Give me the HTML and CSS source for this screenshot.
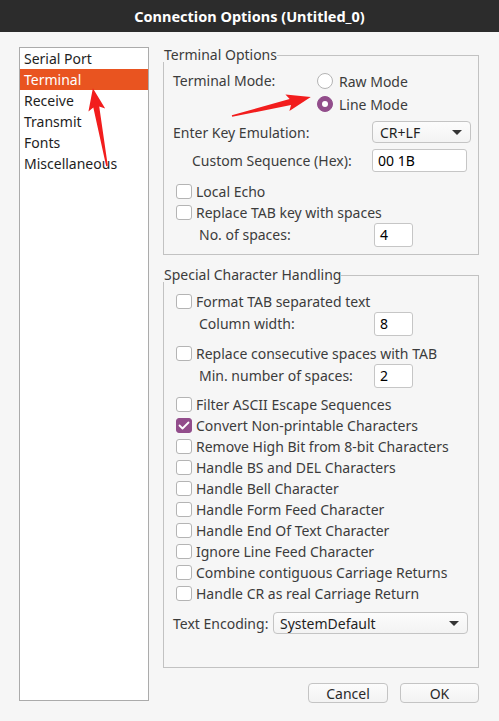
FILE: index.html
```html
<!DOCTYPE html>
<html>
<head>
<meta charset="utf-8">
<link rel="stylesheet" href="styles.css">
</head>
<body>
<div class="titlebar">Connection Options (Untitled_0)</div>
<div class="main">
  <div class="pagelist">
    <div class="item">Serial Port</div>
    <div class="item sel">Terminal</div>
    <div class="item">Receive</div>
    <div class="item">Transmit</div>
    <div class="item">Fonts</div>
    <div class="item">Miscellaneous</div>
  </div>
  <div class="right">
    <div class="group g1">
      <div class="group-head"><span class="group-title">Terminal Options</span><span class="group-line"></span></div>
      <div class="group-body">
        <div class="mode-row">
          <div class="lbl w-mode">Terminal Mode:</div>
          <div class="radios">
            <div class="radio-row"><span class="radio"></span>Raw Mode</div>
            <div class="radio-row r2"><span class="radio on"></span>Line Mode</div>
          </div>
        </div>
        <div class="row enter"><div class="lbl w-enter">Enter Key Emulation:</div><div class="combo c-enter"><span>CR+LF</span><span class="caret"></span></div></div>
        <div class="row custom"><div class="lbl w-custom">Custom Sequence (Hex):</div><div class="input i-custom">00 1B</div></div>
        <div class="check first-check"><span class="box"></span>Local Echo</div>
        <div class="check"><span class="box"></span>Replace TAB key with spaces</div>
        <div class="row sub"><div class="lbl w-sub">No. of spaces:</div><div class="input spin">4</div></div>
      </div>
    </div>
    <div class="group g2">
      <div class="group-head"><span class="group-title">Special Character Handling</span><span class="group-line"></span></div>
      <div class="group-body b2">
        <div class="check"><span class="box"></span>Format TAB separated text</div>
        <div class="row sub"><div class="lbl w-sub">Column width:</div><div class="input spin">8</div></div>
        <div class="check gap8"><span class="box"></span>Replace consecutive spaces with TAB</div>
        <div class="row sub sub2"><div class="lbl w-sub">Min. number of spaces:</div><div class="input spin">2</div></div>
        <div class="check gap7"><span class="box"></span>Filter ASCII Escape Sequences</div>
        <div class="check"><span class="box on"><svg viewBox="0 0 16 15" width="16" height="15"><path d="M3.5 7.5 L6.5 10.5 L12.5 4.5" fill="none" stroke="#fff" stroke-width="1.8" stroke-linecap="round" stroke-linejoin="round"/></svg></span>Convert Non-printable Characters</div>
        <div class="check"><span class="box"></span>Remove High Bit from 8-bit Characters</div>
        <div class="check"><span class="box"></span>Handle BS and DEL Characters</div>
        <div class="check"><span class="box"></span>Handle Bell Character</div>
        <div class="check"><span class="box"></span>Handle Form Feed Character</div>
        <div class="check"><span class="box"></span>Handle End Of Text Character</div>
        <div class="check"><span class="box"></span>Ignore Line Feed Character</div>
        <div class="check"><span class="box"></span>Combine contiguous Carriage Returns</div>
        <div class="check"><span class="box"></span>Handle CR as real Carriage Return</div>
        <div class="row enc"><div class="lbl w-enc">Text Encoding:</div><div class="combo c-enc"><span>SystemDefault</span><span class="caret"></span></div></div>
      </div>
    </div>
    <div class="buttons">
      <div class="btn b-cancel">Cancel</div>
      <div class="btn b-ok">OK</div>
    </div>
  </div>
</div>
<svg class="arrows" width="499" height="721" viewBox="0 0 499 721">
  <polygon fill="#f21d1d" transform="translate(107,166) rotate(-100.3)" points="0,-0.8 60,-3 57,-8.5 79,0 57,8.5 60,3 0,0.8"/>
  <polygon fill="#f21d1d" transform="translate(232,116) rotate(-13.5)" points="0,-0.8 60,-3 57,-8.5 81,0 57,8.5 60,3 0,0.8"/>
</svg>
</body>
</html>
```
FILE: styles.css
```css
* { box-sizing: border-box; }
body {
  margin: 0;
  width: 499px;
  height: 721px;
  overflow: hidden;
  position: relative;
  background: #f6f6f6;
  font-family: "Noto Sans", "DejaVu Sans", sans-serif;
  font-size: 14px;
  color: #3c3c3c;
}
.titlebar {
  height: 32px;
  background: #2c2c2c;
  color: #ffffff;
  font-weight: bold;
  font-size: 14.5px;
  display: flex;
  align-items: center;
  justify-content: center;
  padding-bottom: 1px;
}
.main {
  display: flex;
  padding: 15px 0 0 19px;
}
.pagelist {
  width: 130px;
  height: 654px;
  border: 1px solid #ababab;
  background: #ffffff;
  color: #1e1e1e;
}
.item {
  height: 21px;
  line-height: 21px;
  padding-left: 4px;
  white-space: nowrap;
}
.item.sel {
  background: #e95420;
  color: #ffffff;
}
.right {
  margin-left: 14px;
  width: 316px;
  display: flex;
  flex-direction: column;
}
.group { display: flex; flex-direction: column; }
.g1 { margin-top: 1px; }
.g2 { margin-top: 13px; }
.group-head {
  display: flex;
  height: 14px;
  line-height: 14px;
}
.group-title { margin-left: 1px; white-space: nowrap; }
.group-line {
  flex: 1;
  margin-top: 7px;
  border-top: 1px solid #c2c2c2;
  border-right: 1px solid #c2c2c2;
}
.group-body {
  border: 1px solid #c2c2c2;
  border-top: none;
  padding: 8px 0 8px 9px;
}
.b2 { padding: 9px 0 33px 9px; }
.lbl { white-space: nowrap; flex: none; }
.w-mode { width: 144px; line-height: 22px; }
.w-enter { width: 199px; }
.w-custom { width: 180px; }
.w-sub { width: 175px; }
.w-enc { width: 100px; }
.mode-row { display: flex; }
.radios { display: flex; flex-direction: column; }
.radio-row {
  display: flex;
  align-items: center;
  height: 22px;
}
.radio-row.r2 { margin-top: 1px; }
.radio {
  width: 16px;
  height: 16px;
  border-radius: 50%;
  border: 1px solid #b4b4b4;
  background: #ffffff;
  margin-right: 6px;
  position: relative;
}
.radio.on {
  background: #924d8b;
  border-color: #924d8b;
}
.radio.on::after {
  content: "";
  position: absolute;
  left: 4px;
  top: 4px;
  width: 6px;
  height: 6px;
  border-radius: 50%;
  background: #ffffff;
}
.row {
  display: flex;
  align-items: center;
}
.enter { margin-top: 6px; height: 22px; }
.custom { margin-top: 6px; height: 23px; padding-left: 19px; }
.sub { height: 23px; padding-left: 26px; }
.sub2 { height: 23px; }
.enc { margin-top: 8px; height: 22px; }
.combo {
  height: 22px;
  border: 1px solid #c4c4c4;
  border-radius: 4px;
  background: linear-gradient(#fcfcfc, #f3f3f3);
  display: flex;
  align-items: center;
  justify-content: space-between;
  padding: 0 8px 0 7px;
  color: #1f1f1f;
}
.c-enter { width: 99px; }
.c-enc { width: 195px; padding-left: 6px; }
.caret {
  width: 0;
  height: 0;
  border-left: 5px solid transparent;
  border-right: 5px solid transparent;
  border-top: 5px solid #353535;
}
.input {
  height: 23px;
  border: 1px solid #c6c6c6;
  border-radius: 3px;
  background: #ffffff;
  color: #000000;
  display: flex;
  align-items: center;
  padding-left: 5px;
}
.i-custom { width: 95px; }
.spin { width: 39px; height: 24px; }
.check {
  display: flex;
  align-items: center;
  height: 21px;
  padding-left: 3px;
  white-space: nowrap;
}
.first-check { margin-top: 9px; }
.gap8 { margin-top: 8px; }
.gap7 { margin-top: 7px; }
.box {
  width: 16px;
  height: 15px;
  border: 1px solid #b4b4b4;
  border-radius: 3px;
  background: #ffffff;
  margin-right: 4px;
  flex: none;
  position: relative;
}
.box.on {
  background: #924d8b;
  border-color: #924d8b;
}
.box svg { position: absolute; left: -1px; top: -1px; }
.buttons {
  display: flex;
  justify-content: flex-end;
  gap: 12px;
  margin-top: 15px;
}
.btn {
  height: 20px;
  border: 1px solid #c4c4c4;
  border-radius: 4px;
  background: linear-gradient(#fcfcfc, #f3f3f3);
  display: flex;
  align-items: center;
  justify-content: center;
  color: #2a2a2a;
}
.b-cancel { width: 80px; }
.b-ok { width: 79px; }
.arrows {
  position: absolute;
  left: 0;
  top: 0;
  pointer-events: none;
}
```
